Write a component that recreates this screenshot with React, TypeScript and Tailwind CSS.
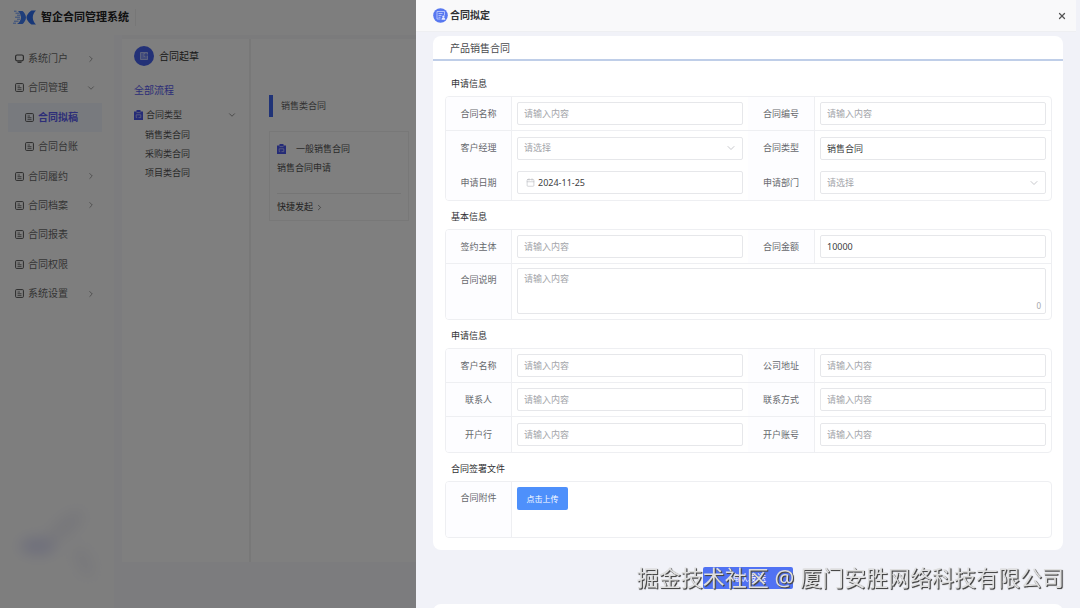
import { useState, type ReactNode } from 'react';
import { Calendar, ChevronDown, ChevronRight, X } from 'lucide-react';

const menuItems = [
  { name: '系统门户', icon: 'monitor', arrow: 'right' },
  { name: '合同管理', icon: 'doc', arrow: 'down' },
  { name: '合同拟稿', icon: 'doc', child: true, active: true },
  { name: '合同台账', icon: 'doc', child: true },
  { name: '合同履约', icon: 'doc', arrow: 'right' },
  { name: '合同档案', icon: 'doc', arrow: 'right' },
  { name: '合同报表', icon: 'doc' },
  { name: '合同权限', icon: 'doc' },
  { name: '系统设置', icon: 'doc', arrow: 'right' },
];

const contractTypes = ['销售类合同', '采购类合同', '项目类合同'];

const controlClass =
  'block h-[23px] w-full rounded-xs border border-[#e6e7ea] bg-white px-[6px] text-[9px] text-[#3c3d40] outline-none placeholder:text-[#a3a5aa]';

function Logo() {
  return (
    <svg width="23" height="15" viewBox="0 0 23 15" aria-hidden="true">
      <path d="M23 0.500h-4.500c-2 1-5 4.500-5 7s3 6 5 7H23c-2-1.800-3.200-4.500-3.200-7s1.200-5.200 3.200-7z" fill="#2f6ff0" />
      <path d="M5 1h4.500c1.500 1 3.500 4 3.500 6.500S11 13 9.500 14H4c2.500-1.600 4-4.200 4-6.500S6.500 2.300 5 1z" fill="#3f7cf5" />
      <path
        d="M1 1.200h2.500M2.500 3.200h4M4 5.200h3.500M2 7.200h5M4 9.200h3M1 11.200h4.500M0 13.200h3"
        stroke="#6a9af8"
        strokeWidth="1"
      />
    </svg>
  );
}

function DocIcon() {
  return (
    <svg width="9" height="9" viewBox="0 0 9 9" fill="none" stroke="currentColor" aria-hidden="true">
      <rect x="0.600" y="0.600" width="7.800" height="7.800" rx="0.800" />
      <path d="M2.500 3h2.500M2.500 4.700h4M2.500 6.400h4" strokeWidth="0.800" />
    </svg>
  );
}

function MonitorIcon() {
  return (
    <svg width="9" height="9" viewBox="0 0 9 9" fill="none" stroke="currentColor" aria-hidden="true">
      <rect x="0.600" y="1" width="7.800" height="5.800" rx="1.500" strokeWidth="1.200" />
      <path d="M2.500 8.300h4" strokeWidth="1.200" />
    </svg>
  );
}

function ClipboardIcon() {
  return (
    <svg width="9" height="10" viewBox="0 0 9 10" aria-hidden="true">
      <path d="M0 1.500h2.500V0h4v1.500H9V10H0z" fill="#4a56ee" />
      <path d="M2.500 2.600h4M2.200 4.800h4.600v2.800H4.500M2.200 4.800v2.800h1" fill="none" stroke="#c5caff" strokeWidth="0.800" />
    </svg>
  );
}

function DraftIcon() {
  return (
    <svg width="20" height="20" viewBox="0 0 20 20" aria-hidden="true">
      <circle cx="10" cy="10" r="10" fill="#4763ef" />
      <rect x="6" y="6" width="8" height="8" rx="0.800" fill="#b9c5ff" />
      <path d="M7 8h2.500M7 10h2.500M7 12h6M11 8h2v2h-2z" fill="none" stroke="#4763ef" strokeWidth="0.900" />
    </svg>
  );
}

function DrawerIcon() {
  return (
    <svg width="15" height="15" viewBox="0 0 15 15" aria-hidden="true">
      <circle cx="7.500" cy="7.500" r="7.300" fill="#5878f0" />
      <path
        d="M4 3.500h7.500v4M4 3.500v7.500h3.500M5.500 5.500h4M5.500 7.500h3M5.500 9.300h2"
        fill="none"
        stroke="#c9d4ff"
        strokeWidth="0.800"
      />
      <path d="M8.500 11.800c0-3 3.800-3 3.800 0z" fill="#e6ebff" />
      <circle cx="10.400" cy="8.700" r="1.100" fill="#e6ebff" />
    </svg>
  );
}

function Sidebar() {
  return (
    <nav className="relative w-[122px] shrink-0 overflow-hidden border-r-8 border-[#f9f9fd] pt-[9px]">
      <div className="flex h-[264px] flex-col justify-between">
        {menuItems.map((item) => (
          <a
            key={item.name}
            href="#"
            className={`mr-3 ml-2 flex h-[29px] items-center gap-1 text-[10px] ${item.child ? 'pl-[17px]' : 'pl-[7px]'} ${
              item.active ? 'bg-[#f0f4fd] font-bold text-[#5a5cf0]' : 'text-[#6a6a6a]'
            }`}
          >
            <span className="text-[#555]">{item.icon === 'monitor' ? <MonitorIcon /> : <DocIcon />}</span>
            <span>{item.name}</span>
            {item.arrow === 'right' && <ChevronRight size={10} strokeWidth={1.500} className="mr-[6px] ml-auto" />}
            {item.arrow === 'down' && <ChevronDown size={10} strokeWidth={1.500} className="mr-[6px] ml-auto" />}
          </a>
        ))}
      </div>
      <svg className="absolute bottom-0 left-0" width="122" height="150" viewBox="0 0 122 150" aria-hidden="true">
        <defs>
          <filter id="soft" x="-50%" y="-50%" width="200%" height="200%">
            <feGaussianBlur stdDeviation="7" />
          </filter>
        </defs>
        <g filter="url(#soft)">
          <ellipse cx="38" cy="88" rx="18" ry="9" fill="#dedff8" />
          <ellipse cx="66" cy="68" rx="22" ry="9" fill="#efeff6" transform="rotate(-40 66 68)" />
          <ellipse cx="84" cy="104" rx="9" ry="18" fill="#f3f3f8" transform="rotate(-25 84 104)" />
        </g>
      </svg>
    </nav>
  );
}

function TypePanel() {
  return (
    <section className="w-[129px] shrink-0 border-r-2 border-[#f0f0f1] pt-[7px] pr-3 pl-3">
      <h2 className="flex items-center gap-[5px] text-[10px] text-[#333]">
        <DraftIcon />
        合同起草
      </h2>
      <a href="#" className="mt-[17px] block text-[10px] leading-[15px] text-[#5a5cf0]">
        全部流程
      </a>
      <button type="button" className="mt-[9px] flex w-full items-center gap-[3px] text-[9px] leading-[15px] text-[#555]">
        <ClipboardIcon />
        合同类型
        <ChevronDown size={10} strokeWidth={1.500} className="ml-auto" />
      </button>
      <ul className="mt-[3px] pl-[11px]">
        {contractTypes.map((type) => (
          <li key={type} className="h-[19px] text-[9px] leading-[19px] text-[#555]">
            <a href="#">{type}</a>
          </li>
        ))}
      </ul>
    </section>
  );
}

function ProcessList() {
  return (
    <section className="w-[158px] shrink-0 pt-14 pl-[18px]">
      <h3 className="flex h-[22px] items-center border-l-4 border-[#4066ee] pl-2 text-[9px] text-[#666]">销售类合同</h3>
      <article className="mt-[14px] border border-[#f0f0f0] px-[7px]">
        <h4 className="flex h-[34px] items-center gap-[10px] text-[9px] text-[#555]">
          <ClipboardIcon />
          一般销售合同
        </h4>
        <p className="h-[27px] text-[9px] leading-[4px] text-[#555]">销售合同申请</p>
        <a href="#" className="flex h-[27px] items-center gap-[2px] border-t border-[#eaeaea] text-[9px] text-[#444]">
          快捷发起
          <ChevronRight size={9} strokeWidth={1.500} />
        </a>
      </article>
    </section>
  );
}

function Section({ title, children }: { title: string; children: ReactNode }) {
  return (
    <section>
      <h3 className="flex h-7 items-center pt-1 pl-[6px] text-[9px] text-[#2f3033]">{title}</h3>
      <div className="grid grid-cols-[66px_1fr_67px_1fr] overflow-hidden rounded-sm border border-[#eeeff2]">{children}</div>
    </section>
  );
}

type FieldProps = {
  id: string;
  label: string;
  kind?: 'text' | 'select' | 'date' | 'textarea';
  value?: string;
  line?: boolean;
  last?: boolean;
};

function Field({ id, label, kind = 'text', value = '', line = true, last = false }: FieldProps) {
  const [text, setText] = useState(value);
  const bottom = line && !last ? 'border-b' : '';
  const wide = kind === 'textarea';
  const height = last ? 'h-[35px]' : 'h-[34px]';

  return (
    <>
      <label
        htmlFor={id}
        className={`flex justify-center border-r border-[#eeeff2] bg-[#fdfdff] text-[9px] text-[#66686d] ${bottom} ${
          wide ? 'pt-[9px]' : 'items-center'
        }`}
      >
        {label}
      </label>
      <div
        className={`relative border-[#eeeff2] px-[5px] ${bottom} ${
          wide ? 'col-span-3 pt-1 pb-[5px]' : `flex items-center ${height}`
        }`}
      >
        {kind === 'text' && (
          <input id={id} value={text} onChange={(e) => setText(e.target.value)} placeholder="请输入内容" className={controlClass} />
        )}
        {kind === 'date' && (
          <>
            <input id={id} value={text} onChange={(e) => setText(e.target.value)} className={`${controlClass} pl-5`} />
            <Calendar size={9} strokeWidth={1.500} className="absolute left-[14px] text-[#b4b6bb]" />
          </>
        )}
        {kind === 'select' && (
          <>
            <select id={id} defaultValue="" className={`${controlClass} appearance-none text-[#a3a5aa]`}>
              <option value="">请选择</option>
            </select>
            <ChevronDown size={12} strokeWidth={1.500} className="pointer-events-none absolute right-[11px] text-[#b4b6bb]" />
          </>
        )}
        {kind === 'textarea' && (
          <>
            <textarea
              id={id}
              value={text}
              onChange={(e) => setText(e.target.value)}
              placeholder="请输入内容"
              className="block h-[46px] w-full resize-none rounded-xs border border-[#e6e7ea] bg-white px-[6px] py-[3px] text-[9px] leading-[13px] outline-none placeholder:text-[#a3a5aa]"
            />
            <span className="absolute right-[10px] bottom-2 text-[8px] leading-[10px] text-[#a3a5aa]">{text.length}</span>
          </>
        )}
      </div>
    </>
  );
}

function ContractDrawer() {
  return (
    <div role="dialog" aria-label="合同拟定" className="fixed inset-y-0 right-0 left-[416px] overflow-hidden bg-[#f1f2f8]">
      <header className="mr-1 flex h-8 items-center border-b border-[#eeeff2] bg-[#f9f9fa] pr-[9px] pl-[17px]">
        <DrawerIcon />
        <h1 className="ml-[2px] text-[10px] font-bold text-[#303133]">合同拟定</h1>
        <button type="button" aria-label="关闭" className="ml-auto text-[#555]">
          <X size={10} strokeWidth={3} />
        </button>
      </header>
      <form className="px-[17px] pt-1" onSubmit={(e) => e.preventDefault()}>
        <div className="rounded-lg bg-white pb-3">
          <h2 className="flex h-[25px] items-center border-b-2 border-[#bfcee8] pt-px pl-[17px] text-[10px] text-[#4a4b4e]">
            产品销售合同
          </h2>
          <div className="pt-[7px] pr-[11px] pl-3">
            <Section title="申请信息">
              <Field id="name" label="合同名称" />
              <Field id="code" label="合同编号" />
              <Field id="manager" label="客户经理" kind="select" line={false} />
              <Field id="type" label="合同类型" value="销售合同" line={false} />
              <Field id="date" label="申请日期" kind="date" value="2024-11-25" last />
              <Field id="dept" label="申请部门" kind="select" last />
            </Section>
            <Section title="基本信息">
              <Field id="party" label="签约主体" />
              <Field id="amount" label="合同金额" value="10000" />
              <Field id="remark" label="合同说明" kind="textarea" last />
            </Section>
            <Section title="申请信息">
              <Field id="customer" label="客户名称" />
              <Field id="address" label="公司地址" />
              <Field id="contact" label="联系人" />
              <Field id="phone" label="联系方式" />
              <Field id="bank" label="开户行" last />
              <Field id="account" label="开户账号" last />
            </Section>
            <Section title="合同签署文件">
              <span className="flex justify-center border-r border-[#eeeff2] bg-[#fdfdff] pt-[9px] text-[9px] text-[#66686d]">
                合同附件
              </span>
              <div className="col-span-3 h-[55px] px-[5px] pt-[5px]">
                <button type="button" className="block h-[23px] w-[51px] rounded-xs bg-[#4e90fb] text-[8px] text-white">
                  点击上传
                </button>
              </div>
            </Section>
          </div>
        </div>
        <button type="submit" className="mx-auto mt-[17px] block h-[22px] w-[90px] rounded-xs bg-[#5072f3] text-[9px] text-white">
          确认发送
        </button>
        <div className="mt-[15px] h-10 rounded-t-lg bg-white" />
      </form>
    </div>
  );
}

export default function App() {
  return (
    <div className="relative flex h-screen flex-col overflow-hidden bg-[#fdfdfd] font-['Noto_Sans','Noto_Sans_CJK_SC',sans-serif]">
      <header className="flex h-[35px] shrink-0 items-center gap-[5px] pl-[13px]">
        <Logo />
        <span className="border-r border-[#eee] pr-[6px] text-[11px] font-bold text-[#222]">智企合同管理系统</span>
      </header>
      <div className="flex min-h-0 flex-1">
        <Sidebar />
        <main className="flex flex-1 flex-col border-t-4 border-[#f7f7f9] bg-[#f9f9fc] pb-[46px]">
          <div className="flex flex-1 bg-[#fefefe]">
            <TypePanel />
            <ProcessList />
          </div>
        </main>
      </div>
      <div className="fixed inset-0 bg-black/50" />
      <ContractDrawer />
      <p className="pointer-events-none fixed right-4 bottom-[15px] text-[22px] leading-8 whitespace-nowrap text-[#dedede] [text-shadow:1px_1px_1px_#444,1px_1px_0_#666]">
        掘金技术社区 @ 厦门安胜网络科技有限公司
      </p>
    </div>
  );
}
